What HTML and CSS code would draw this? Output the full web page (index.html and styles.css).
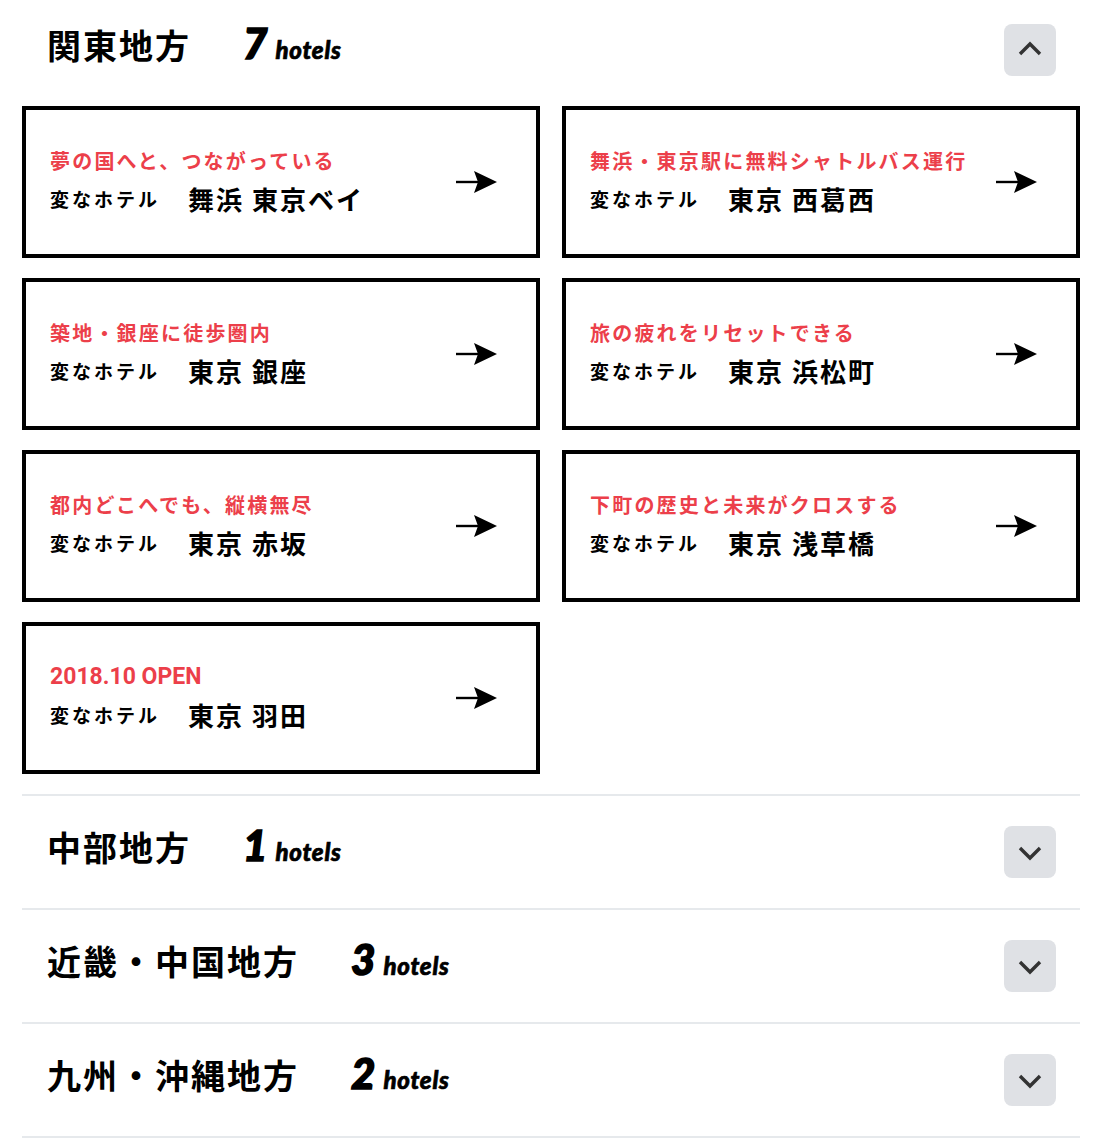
FILE: index.html
```html
<!DOCTYPE html>
<html lang="ja">
<head>
  <meta charset="UTF-8" />
  <title>変なホテル - エリア</title>
  <meta name="viewport" content="width=device-width, initial-scale=1.0" />
  <link rel="stylesheet" href="styles.css">
</head>
<body>

<div class="areas">

  <section class="area open">
    <div class="area-head">
      <h2 class="area-name">関東地方</h2>
      <p class="area-count"><span class="num">7</span><span class="unit">hotels</span></p>
      <button class="toggle" aria-label="閉じる">
        <svg width="28" height="28" viewBox="0 0 28 28"><path d="M4 18 L14 8 L24 18" /></svg>
      </button>
    </div>

    <div class="hotel-list">
      <a class="hotel" href="#">
        <div class="hotel-text">
          <p class="catch">夢の国へと、つながっている</p>
          <p class="name"><span class="brand">変なホテル</span><span class="place">舞浜 東京ベイ</span></p>
        </div>
        <svg class="arrow" width="42" height="24" viewBox="0 0 42 24"><line x1="0" y1="12" x2="24" y2="12" /><path d="M18 1 L41 12 L18 23 L22 12 Z" /></svg>
      </a>
      <a class="hotel" href="#">
        <div class="hotel-text">
          <p class="catch">舞浜・東京駅に無料シャトルバス運行</p>
          <p class="name"><span class="brand">変なホテル</span><span class="place">東京 西葛西</span></p>
        </div>
        <svg class="arrow" width="42" height="24" viewBox="0 0 42 24"><line x1="0" y1="12" x2="24" y2="12" /><path d="M18 1 L41 12 L18 23 L22 12 Z" /></svg>
      </a>
      <a class="hotel" href="#">
        <div class="hotel-text">
          <p class="catch">築地・銀座に徒歩圏内</p>
          <p class="name"><span class="brand">変なホテル</span><span class="place">東京 銀座</span></p>
        </div>
        <svg class="arrow" width="42" height="24" viewBox="0 0 42 24"><line x1="0" y1="12" x2="24" y2="12" /><path d="M18 1 L41 12 L18 23 L22 12 Z" /></svg>
      </a>
      <a class="hotel" href="#">
        <div class="hotel-text">
          <p class="catch">旅の疲れをリセットできる</p>
          <p class="name"><span class="brand">変なホテル</span><span class="place">東京 浜松町</span></p>
        </div>
        <svg class="arrow" width="42" height="24" viewBox="0 0 42 24"><line x1="0" y1="12" x2="24" y2="12" /><path d="M18 1 L41 12 L18 23 L22 12 Z" /></svg>
      </a>
      <a class="hotel" href="#">
        <div class="hotel-text">
          <p class="catch">都内どこへでも、縦横無尽</p>
          <p class="name"><span class="brand">変なホテル</span><span class="place">東京 赤坂</span></p>
        </div>
        <svg class="arrow" width="42" height="24" viewBox="0 0 42 24"><line x1="0" y1="12" x2="24" y2="12" /><path d="M18 1 L41 12 L18 23 L22 12 Z" /></svg>
      </a>
      <a class="hotel" href="#">
        <div class="hotel-text">
          <p class="catch">下町の歴史と未来がクロスする</p>
          <p class="name"><span class="brand">変なホテル</span><span class="place">東京 浅草橋</span></p>
        </div>
        <svg class="arrow" width="42" height="24" viewBox="0 0 42 24"><line x1="0" y1="12" x2="24" y2="12" /><path d="M18 1 L41 12 L18 23 L22 12 Z" /></svg>
      </a>
      <a class="hotel" href="#">
        <div class="hotel-text">
          <p class="catch latin">2018.10 OPEN</p>
          <p class="name"><span class="brand">変なホテル</span><span class="place">東京 羽田</span></p>
        </div>
        <svg class="arrow" width="42" height="24" viewBox="0 0 42 24"><line x1="0" y1="12" x2="24" y2="12" /><path d="M18 1 L41 12 L18 23 L22 12 Z" /></svg>
      </a>
    </div>
  </section>

  <section class="area">
    <div class="area-head">
      <h2 class="area-name">中部地方</h2>
      <p class="area-count"><span class="num">1</span><span class="unit">hotels</span></p>
      <button class="toggle" aria-label="開く">
        <svg width="28" height="28" viewBox="0 0 28 28"><path d="M4 10 L14 20 L24 10" /></svg>
      </button>
    </div>
  </section>

  <section class="area">
    <div class="area-head">
      <h2 class="area-name">近畿・中国地方</h2>
      <p class="area-count"><span class="num">3</span><span class="unit">hotels</span></p>
      <button class="toggle" aria-label="開く">
        <svg width="28" height="28" viewBox="0 0 28 28"><path d="M4 10 L14 20 L24 10" /></svg>
      </button>
    </div>
  </section>

  <section class="area">
    <div class="area-head">
      <h2 class="area-name">九州・沖縄地方</h2>
      <p class="area-count"><span class="num">2</span><span class="unit">hotels</span></p>
      <button class="toggle" aria-label="開く">
        <svg width="28" height="28" viewBox="0 0 28 28"><path d="M4 10 L14 20 L24 10" /></svg>
      </button>
    </div>
  </section>

</div>

</body>
</html>
```

FILE: styles.css
```css
:root {
  --ink: #000;
  --accent: #ec3f4a;
  --line: #e6e9ec;
  --btn-bg: #dfe1e5;
  --btn-ink: #333;
}

body {
  margin: 0;
  background: #fff;
  color: var(--ink);
  font-family: "Noto Sans CJK JP", "Noto Sans", sans-serif;
}

p, h2 {
  margin: 0;
}

.areas {
  padding: 0 28px 0 22px;
}

.area {
  border-bottom: 2px solid var(--line);
  padding: 30px 0;
}

.area.open {
  padding: 24px 0 20px;
}

.area-head {
  display: flex;
  align-items: center;
  padding: 0 24px 0 25px;
  height: 52px;
}

.area-name {
  font-size: 34px;
  font-weight: 700;
  line-height: 1;
  letter-spacing: 2px;
  margin-top: -10px;
}

.area-count {
  display: flex;
  align-items: baseline;
  margin-left: 52px;
  margin-top: -15px;
  font-family: Lato, "DejaVu Sans", sans-serif;
  font-style: italic;
  font-weight: 900;
  line-height: 1;
}

.area-count .num {
  font-size: 42px;
  -webkit-text-stroke: 1.6px var(--ink);
  margin-right: 8px;
}

.area-count .unit {
  font-size: 24px;
  letter-spacing: 0.8px;
  -webkit-text-stroke: 0.7px var(--ink);
}

.toggle {
  margin-left: auto;
  width: 52px;
  height: 52px;
  border: none;
  border-radius: 8px;
  background: var(--btn-bg);
  display: flex;
  align-items: center;
  justify-content: center;
  padding: 0;
  cursor: pointer;
}

.toggle path {
  fill: none;
  stroke: var(--btn-ink);
  stroke-width: 3.4;
}

.hotel-list {
  display: grid;
  grid-template-columns: 1fr 1fr;
  gap: 20px 22px;
  margin-top: 30px;
}

.hotel {
  display: flex;
  align-items: center;
  justify-content: space-between;
  height: 152px;
  box-sizing: border-box;
  border: 4px solid var(--ink);
  padding: 0 38px 0 24px;
  color: var(--ink);
  text-decoration: none;
}

.catch {
  color: var(--accent);
  font-size: 20px;
  font-weight: 700;
  line-height: 28px;
  letter-spacing: 2.2px;
}

.catch.latin {
  font-family: Roboto, "Noto Sans", sans-serif;
  font-size: 23px;
  letter-spacing: 0;
}

.name {
  display: flex;
  align-items: center;
  margin-top: 6px;
  line-height: 36px;
}

.brand {
  font-size: 19px;
  font-weight: 700;
  letter-spacing: 3px;
}

.place {
  margin-left: 28px;
  font-size: 26px;
  font-weight: 700;
  letter-spacing: 2px;
}

.arrow line {
  stroke: var(--ink);
  stroke-width: 2.4;
}

.arrow path {
  fill: var(--ink);
}
```
